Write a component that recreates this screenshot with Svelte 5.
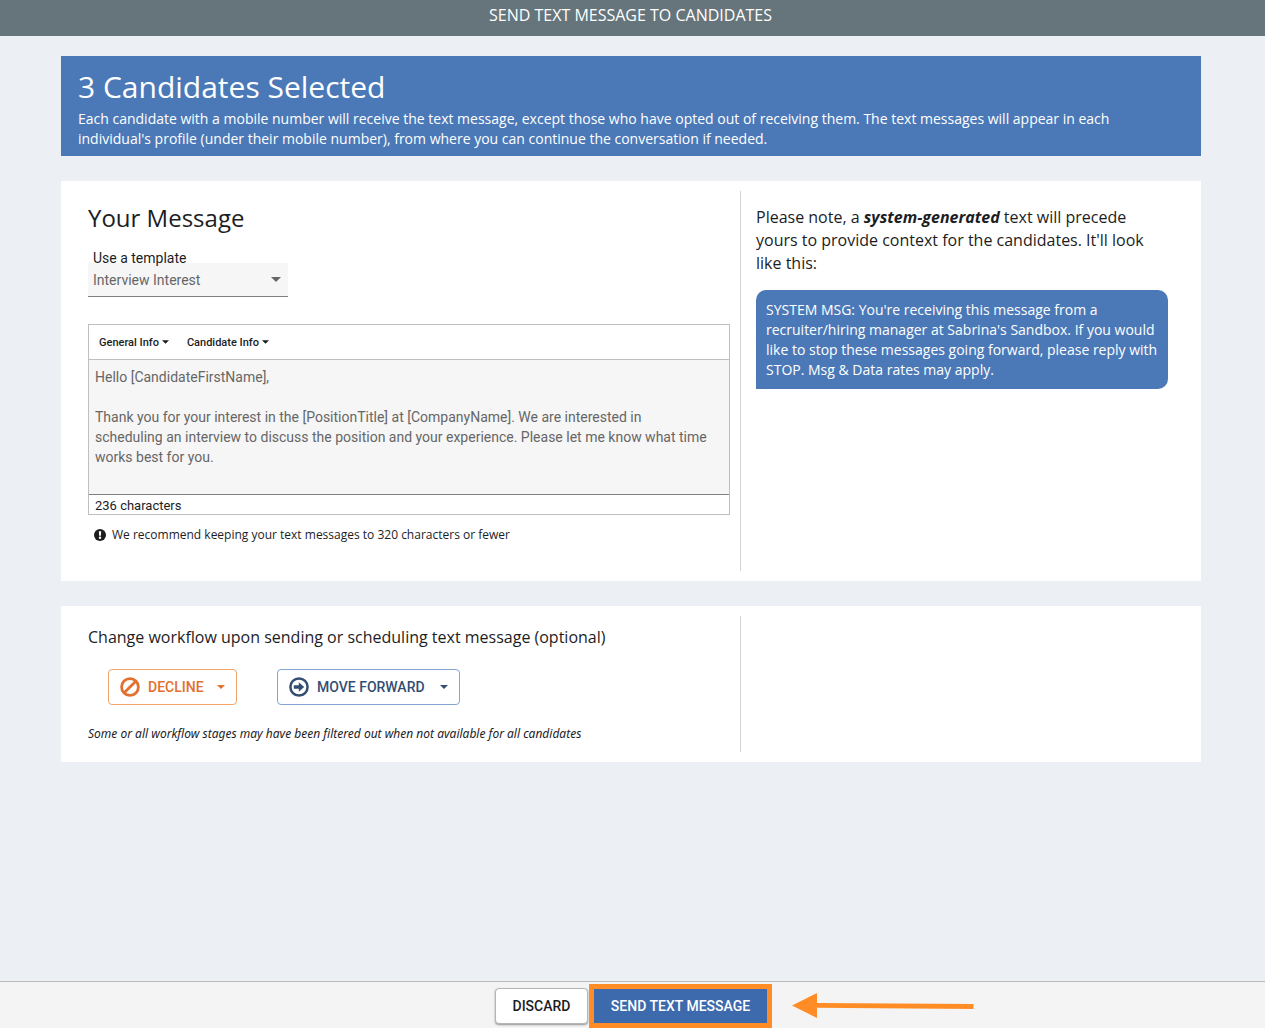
<script lang="ts">
	const templates = ['Interview Interest'];
	const menus = ['General Info', 'Candidate Info'];

	let template = $state(templates[0]);
	let count = $state(3);
	let message = $state(
		'Hello [CandidateFirstName],\n\n' +
		'Thank you for your interest in the [PositionTitle] at [CompanyName]. We are interested in scheduling an interview to discuss the position and your experience. Please let me know what time works best for you.'
	);

	let chars = $derived(message.length);
</script>

{#snippet caret()}
	<svg class="caret" viewBox="0 0 10 5" aria-hidden="true"><path d="M0 0h10L5 5z" /></svg>
{/snippet}

<div class="page">
	<header>SEND TEXT MESSAGE TO CANDIDATES</header>

	<main>
		<section class="banner">
			<h1>{count} Candidates Selected</h1>
			<p>Each candidate with a mobile number will receive the text message, except those who have opted out of receiving them. The text messages will appear in each individual's profile (under their mobile number), from where you can continue the conversation if needed.</p>
		</section>

		<section class="card message">
			<div class="left">
				<h2>Your Message</h2>

				<label class="tpl-label" for="template">Use a template</label>
				<div class="select">
					<select id="template" bind:value={template}>
						{#each templates as t}
							<option>{t}</option>
						{/each}
					</select>
					{@render caret()}
				</div>

				<div class="editor">
					<div class="toolbar">
						{#each menus as m}
							<button type="button">{m}{@render caret()}</button>
						{/each}
					</div>
					<textarea aria-label="Your Message" bind:value={message}></textarea>
					<div class="chars">{chars} characters</div>
				</div>

				<p class="hint">
					<svg viewBox="0 0 12 12" aria-hidden="true">
						<circle cx="6" cy="6" r="6" fill="#1c1d1f" />
						<path d="M4.8 2.2h2.4L6.9 6.8H5.1z" fill="#fff" />
						<circle cx="6" cy="8.8" r="1.2" fill="#fff" />
					</svg>
					We recommend keeping your text messages to 320 characters or fewer
				</p>
			</div>

			<div class="right">
				<p class="note">Please note, a <strong>system-generated</strong> text will precede yours to provide context for the candidates. It'll look like this:</p>
				<div class="bubble">SYSTEM MSG: You're receiving this message from a recruiter/hiring manager at Sabrina's Sandbox. If you would like to stop these messages going forward, please reply with STOP. Msg &amp; Data rates may apply.</div>
			</div>
		</section>

		<section class="card workflow">
			<div class="left">
				<p class="title">Change workflow upon sending or scheduling text message (optional)</p>
				<div class="actions">
					<button type="button" class="decline">
						<svg class="icon" viewBox="0 0 20 20" fill="none" stroke="currentColor" stroke-width="2.8" aria-hidden="true">
							<circle cx="10" cy="10" r="8.4" />
							<path d="M4.2 15.8L15.8 4.2" />
						</svg>
						DECLINE
						{@render caret()}
					</button>
					<button type="button" class="forward">
						<svg class="icon" viewBox="0 0 20 20" aria-hidden="true">
							<circle cx="10" cy="10" r="8.6" fill="none" stroke="currentColor" stroke-width="2.5" />
							<path d="M4.8 8.2h5v-3l5.4 4.8-5.4 4.8v-3h-5z" fill="currentColor" />
						</svg>
						MOVE FORWARD
						{@render caret()}
					</button>
				</div>
				<p class="foot">Some or all workflow stages may have been filtered out when not available for all candidates</p>
			</div>
			<div class="right"></div>
		</section>
	</main>

	<footer>
		<button type="button" class="discard">DISCARD</button>
		<div class="send-wrap">
			<button type="button" class="send">SEND TEXT MESSAGE</button>
			<svg class="arrow" viewBox="0 0 182 26" aria-hidden="true">
				<path d="M0 12.5L25 0v10l156.5 1v5L25 14.8V25z" fill="#ff8c24" />
			</svg>
		</div>
	</footer>
</div>

<style>
	:global(body) { margin: 0; background: #ecf0f5; }

	.page {
		display: flex;
		flex-direction: column;
		min-height: 100vh;
		font-family: 'Open Sans', sans-serif;
		color: #1c1d1f;
	}
	.page * { box-sizing: border-box; }
	h1, h2, p { margin: 0; font-weight: 400; }
	button { font-family: Roboto, sans-serif; cursor: pointer; }

	header {
		height: 36px;
		padding-right: 4px;
		background: #65757b;
		color: #fff;
		font-size: 16px;
		line-height: 31px;
		text-align: center;
	}

	main {
		flex: 1;
		display: flex;
		flex-direction: column;
		gap: 25px;
		padding: 20px 64px 20px 61px;
	}

	.banner {
		background: #4b79b8;
		color: #fff;
		padding: 11px 17px 7px;
	}
	.banner h1 { font-size: 30px; line-height: 40px; margin-bottom: 2px; }
	.banner p { font-size: 14px; line-height: 20px; max-width: 1060px; }

	.card {
		display: grid;
		grid-template-columns: 679fr 461fr;
		background: #fff;
		padding: 10px 0;
	}
	.left { padding: 0 10px 0 27px; }
	.right { border-left: 1px solid #d3d3d3; padding: 15px 33px 0 15px; }

	.message .left { padding-bottom: 27px; }
	h2 { font-size: 24px; line-height: 32px; padding-top: 11px; }

	.tpl-label {
		display: block;
		margin-top: 14px;
		height: 15px;
		padding-left: 5px;
		font: 14px/20px Roboto, sans-serif;
		position: relative;
		z-index: 1;
	}
	.select {
		display: flex;
		align-items: center;
		width: 200px;
		height: 34px;
		background: #f6f6f6;
		border-bottom: 1px solid #808080;
	}
	.select select {
		appearance: none;
		flex: 1;
		height: 100%;
		margin-right: -17px;
		padding: 0 24px 0 5px;
		border: 0;
		background: transparent;
		color: #666;
		font: 14px/20px Roboto, sans-serif;
	}
	.select .caret { width: 10px; height: 5px; margin-right: 7px; fill: #666; pointer-events: none; }

	.editor { margin-top: 27px; border: 1px solid #bfbfbf; }
	.toolbar {
		display: flex;
		gap: 18px;
		height: 35px;
		padding: 0 10px;
		border-bottom: 1px solid #bfbfbf;
	}
	.toolbar button {
		display: flex;
		align-items: center;
		gap: 3px;
		padding: 0;
		border: 0;
		background: none;
		color: #1c1d1f;
		font-size: 11px;
		font-weight: 500;
	}
	.toolbar .caret { width: 7px; height: 4px; }
	textarea {
		display: block;
		width: 100%;
		height: 135px;
		padding: 7px 20px 7px 6px;
		border: 0;
		border-bottom: 1px solid #808080;
		resize: none;
		background: #f6f6f6;
		color: #666;
		font: 14px/20px Roboto, sans-serif;
	}
	.chars { padding: 2px 6px 0; font: 13px/17px Roboto, sans-serif; }

	.hint {
		display: flex;
		align-items: center;
		gap: 6px;
		margin-top: 11px;
		padding-left: 6px;
		font-size: 12px;
		line-height: 18px;
	}
	.hint svg { width: 12px; height: 12px; }

	.note { font-size: 16px; line-height: 23px; }
	.note strong { font-style: italic; font-weight: 700; }
	.bubble {
		margin-top: 15px;
		padding: 10px 10px 9px;
		border-radius: 10px 10px 10px 0;
		background: #4b79b8;
		color: #fff;
		font-size: 14px;
		line-height: 20px;
	}

	.title { font-size: 16px; line-height: 22px; padding-top: 10px; }
	.actions { display: flex; gap: 40px; margin: 21px 20px; }
	.actions button {
		display: flex;
		align-items: center;
		gap: 8px;
		height: 36px;
		padding: 0 11px;
		border: 1px solid;
		border-radius: 4px;
		background: #fff;
		font-size: 14px;
		font-weight: 500;
	}
	.actions .icon { width: 20px; height: 20px; }
	.actions .caret { width: 8px; height: 4px; margin-left: auto; }
	.actions .decline { min-width: 129px; color: #e2702e; border-color: #f3a469; }
	.actions .forward { min-width: 183px; color: #344e73; border-color: #83a5d2; }
	.foot {
		padding-bottom: 10px;
		font: italic 12px/16px 'Noto Sans', 'Open Sans', sans-serif;
	}

	.caret { fill: currentColor; }

	footer {
		display: flex;
		justify-content: center;
		align-items: center;
		gap: 6px;
		height: 47px;
		padding: 2px 3px 0 0;
		border-top: 1px solid #b9bcbf;
		background: #f4f4f4;
	}
	footer button { font-size: 14px; font-weight: 500; }
	.discard {
		min-width: 93px;
		height: 36px;
		padding: 0 15px 1px;
		border: 1px solid #b5b5b5;
		border-radius: 4px;
		background: #fff;
		color: #1c1d1f;
		box-shadow: 0 1px 2px rgba(0, 0, 0, 0.4);
	}
	.send-wrap { position: relative; }
	.send {
		display: block;
		min-width: 173px;
		height: 34px;
		padding: 0 14px 1px;
		border: 0;
		background: #3d6aad;
		color: #fff;
		outline: 5px solid #ff8c24;
	}
	.arrow { position: absolute; left: 100%; top: 4px; margin-left: 25px; width: 182px; height: 26px; }
</style>
